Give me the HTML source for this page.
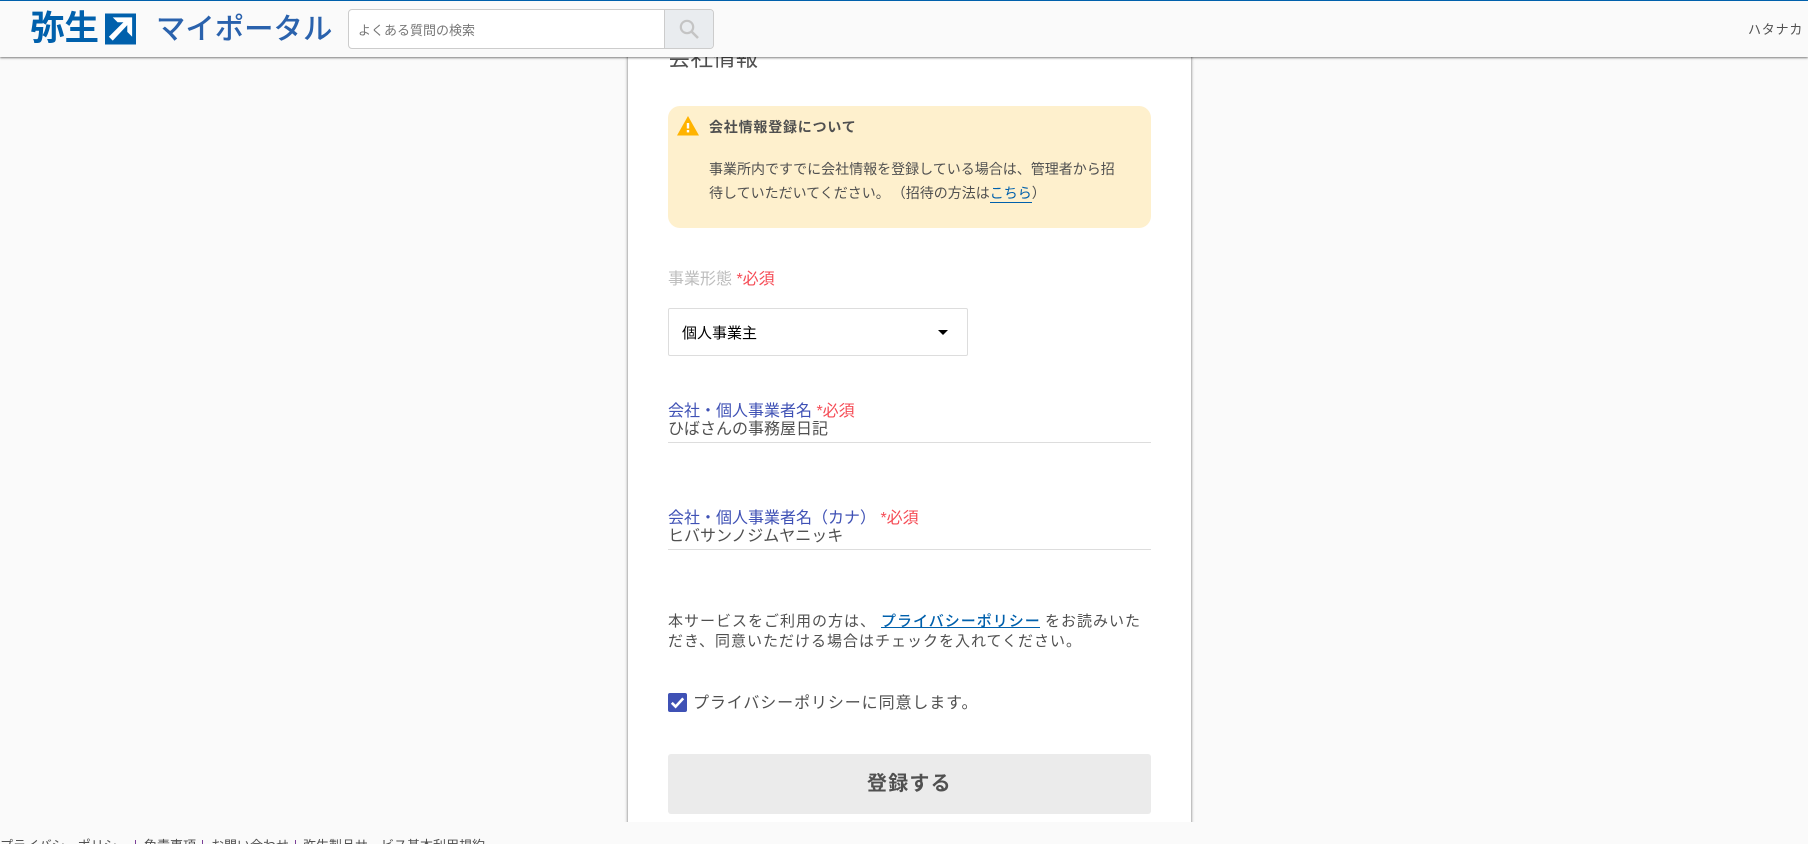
<!DOCTYPE html>
<html lang="ja"><head><meta charset="utf-8"><title>弥生マイポータル</title>
<style>
html,body{margin:0;padding:0;width:1808px;height:844px;overflow:hidden;background:#fafafa}
body{font-family:"Liberation Sans","Noto Sans CJK JP",sans-serif;color:#505050}
#root{position:relative;width:1808px;height:844px;overflow:hidden;contain:paint}
.a{position:absolute;white-space:nowrap;line-height:1}
.r{color:#f54b55}
</style></head><body><div id="root">

<!-- card -->
<div class="a" style="left:620px;top:40px;width:580px;height:782px;overflow:hidden">
  <div style="position:absolute;left:8px;top:-20px;width:563px;height:820px;background:#fff;box-shadow:0 0 3px rgba(0,0,0,.6)"></div>
</div>
<div class="a" style="left:668px;top:48px;font-size:22.5px;line-height:22px;color:#505050">会社情報</div>

<!-- alert -->
<div class="a" style="left:668px;top:106px;width:483px;height:122px;background:#fef0cd;border-radius:12px"></div>
<svg class="a" style="left:676px;top:115px" width="24" height="21" viewBox="0 0 24 21"><path d="M12 1L23 20.5H1Z" fill="#ffb300"/><rect x="10.8" y="8" width="2.4" height="5.5" fill="#fff"/><rect x="10.8" y="15" width="2.4" height="2.4" fill="#fff"/></svg>
<div class="a" style="left:709px;top:120px;font-size:14px;line-height:14px;font-weight:700;letter-spacing:.8px;color:#505050">会社情報登録について</div>
<div class="a" style="left:709px;top:157px;font-size:14px;line-height:24px;color:#505050">事業所内ですでに会社情報を登録している場合は、管理者から招</div>
<div class="a" style="left:709px;top:181px;font-size:14px;line-height:24px;color:#505050">待していただいてください。<span style="margin-left:9px">（招待の方法は</span><span style="color:#0060ac">こちら</span>）</div>
<div class="a" style="left:990px;top:202px;width:42px;height:1px;background:#0060ac"></div>

<!-- select -->
<div class="a" style="left:668px;top:272px;font-size:16px;line-height:16px;color:#bdbdbd">事業形態 <span class="r">*必須</span></div>
<div class="a" style="left:668px;top:308px;width:300px;height:48px;box-sizing:border-box;border:1px solid #ddd;border-radius:2px;background:#fff"></div>
<div class="a" style="left:682px;top:326px;font-size:15px;line-height:15px;color:#000">個人事業主</div>
<svg class="a" style="left:938px;top:330px" width="10" height="5" viewBox="0 0 10 5"><path d="M0 0H10L5 5Z" fill="#000"/></svg>

<!-- field 1 -->
<div class="a" style="left:668px;top:404px;font-size:16px;line-height:16px;color:#3f51b5">会社・個人事業者名 <span class="r">*必須</span></div>
<div class="a" style="left:668px;top:422px;font-size:16px;line-height:16px;color:#505050">ひばさんの事務屋日記</div>
<div class="a" style="left:668px;top:442px;width:483px;height:1px;background:#ddd"></div>

<!-- field 2 -->
<div class="a" style="left:668px;top:511px;font-size:16px;line-height:16px;color:#3f51b5">会社・個人事業者名（カナ） <span class="r">*必須</span></div>
<div class="a" style="left:668px;top:529px;font-size:16px;line-height:16px;color:#505050">ヒバサンノジムヤニッキ</div>
<div class="a" style="left:668px;top:549px;width:483px;height:1px;background:#ddd"></div>

<!-- policy text -->
<div class="a" style="left:668px;top:614px;font-size:15px;line-height:16px;letter-spacing:1px;color:#505050">本サービスをご利用の方は、</div>
<div class="a" style="left:881px;top:614px;font-size:15px;line-height:16px;letter-spacing:1px;font-weight:500;color:#0060ac">プライバシーポリシー</div>
<div class="a" style="left:881px;top:627px;width:159px;height:1px;background:#0060ac"></div>
<div class="a" style="left:1045px;top:614px;font-size:15px;line-height:16px;letter-spacing:1px;color:#505050">をお読みいた</div>
<div class="a" style="left:668px;top:634px;font-size:15px;line-height:16px;letter-spacing:1px;color:#505050">だき、同意いただける場合はチェックを入れてください。</div>

<!-- checkbox -->
<svg class="a" style="left:668px;top:693px" width="19" height="19" viewBox="0 0 19 19"><rect width="19" height="19" rx="2" fill="#3f51b5"/><path d="M3.8 9.8L7.6 13.6L15.2 5.4" fill="none" stroke="#fff" stroke-width="2.6"/></svg>
<div class="a" style="left:693px;top:696px;font-size:16px;line-height:16px;letter-spacing:.9px;color:#505050">プライバシーポリシーに同意します。</div>

<!-- button -->
<div class="a" style="left:668px;top:754px;width:483px;height:60px;background:#ebebeb;border-radius:3px"></div>
<div class="a" style="left:867px;top:774px;font-size:20px;line-height:20px;font-weight:700;letter-spacing:1.2px;color:#505050">登録する</div>

<!-- footer -->
<div class="a" style="left:0;top:830px;width:1808px;height:14px;overflow:hidden">
  <div class="a" style="left:0;top:9px;font-size:13px;line-height:14px;color:#505050">プライバシーポリシー</div>
  <div class="a" style="left:135px;top:10px;width:1px;height:4px;background:#7b3f98"></div>
  <div class="a" style="left:144px;top:9px;font-size:13px;line-height:14px;color:#505050">免責事項</div>
  <div class="a" style="left:202px;top:10px;width:1px;height:4px;background:#7b3f98"></div>
  <div class="a" style="left:211px;top:9px;font-size:13px;line-height:14px;color:#505050">お問い合わせ</div>
  <div class="a" style="left:295px;top:10px;width:1px;height:4px;background:#7b3f98"></div>
  <div class="a" style="left:303px;top:9px;font-size:13px;line-height:14px;color:#505050">弥生製品サービス基本利用規約</div>
</div>

<!-- header -->
<div class="a" style="left:0;top:0;width:1808px;height:57px;background:#fafafa;border-top:1px solid #0060ac;box-sizing:border-box;box-shadow:0 1px 2px rgba(0,0,0,.5)"></div>
<div class="a" style="left:30px;top:12px;font-size:34.5px;line-height:34px;font-weight:700;color:#0060ac">弥生</div>
<svg class="a" style="left:105px;top:13px" width="31" height="32" viewBox="0 0 32 32"><rect width="32" height="32" fill="#0060ac"/><path d="M8 4H28V24L23 19V12L8 28L4 24L19 9H13Z" fill="#fff"/></svg>
<div class="a" style="left:156px;top:15px;font-size:29.4px;line-height:30px;font-weight:500;color:#2a62ad">マイポータル</div>
<div class="a" style="left:348px;top:9px;width:366px;height:40px;box-sizing:border-box;border:1px solid #ccc;border-radius:4px;background:#fff;overflow:hidden">
  <div style="position:absolute;right:0;top:0;width:48px;height:38px;background:#e9ecef;border-left:1px solid #ccc"></div>
</div>
<div class="a" style="left:358px;top:24px;font-size:13px;line-height:13px;color:#777">よくある質問の検索</div>
<svg class="a" style="left:678px;top:18px" width="22" height="22" viewBox="0 0 22 22"><circle cx="9" cy="9" r="6.2" fill="none" stroke="#c4c4c4" stroke-width="2.2"/><path d="M13.5 13.5L20 20" stroke="#c4c4c4" stroke-width="2.6"/></svg>
<div class="a" style="left:1748px;top:23px;font-size:13px;line-height:13px;color:#505050;letter-spacing:.8px">ハタナカ</div>

</div></body></html>
